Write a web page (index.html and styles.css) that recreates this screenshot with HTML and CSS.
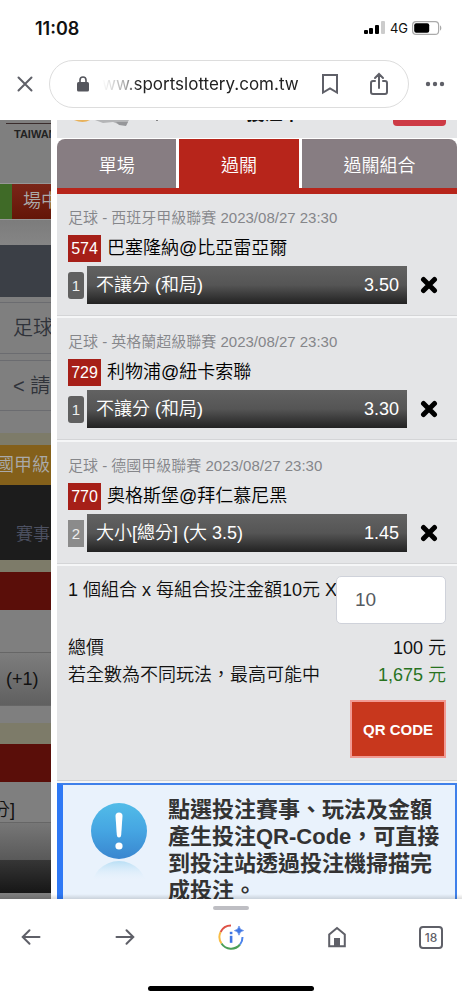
FILE: index.html
```html
<!DOCTYPE html>
<html lang="zh-TW">
<head>
<meta charset="utf-8">
<meta name="viewport" content="width=device-width, initial-scale=1">
<title>投注單</title>
<link rel="stylesheet" href="styles.css">
</head>
<body>
<div class="status">
  <span class="clock">11:08</span>
  <span class="signals">
    <svg width="22" height="14" viewBox="0 0 22 14"><rect x="0" y="9" width="4" height="4" rx="1"/><rect x="5" y="7" width="4" height="6" rx="1"/><rect x="11" y="4" width="4" height="9" rx="1"/><rect x="17" y="0" width="4" height="13" rx="1" fill="#ccc"/></svg>
    <span class="net">4G</span>
    <svg width="30" height="14" viewBox="0 0 30 14"><rect x=".6" y=".6" width="26" height="12.8" rx="3.5" fill="none" stroke="#aaa" stroke-width="1.2"/><rect x="2.2" y="2.2" width="15" height="9.6" rx="2"/><path d="M28 4.5c1.8.6 1.8 4.4 0 5z" fill="#aaa"/></svg>
  </span>
</div>
<nav class="browser">
  <button class="icon" aria-label="關閉"><svg width="16" height="16" viewBox="0 0 16 16"><path d="M1.5 1.5l13 13M14.5 1.5l-13 13" class="ln"/></svg></button>
  <div class="pill">
    <svg width="12" height="16" viewBox="0 0 12 16"><rect y="6" width="12" height="9.5" rx="1.6" fill="#55565d"/><path d="M3 7V4a3 3 0 0 1 6 0v3" fill="none" stroke="#55565d" stroke-width="1.6"/></svg>
    <span class="url">ww.sportslottery.com.tw</span>
    <button class="icon" aria-label="書籤"><svg width="18" height="22" viewBox="0 0 18 22"><path d="M2 2h14v17.5l-7-4-7 4z" class="ln"/></svg></button>
    <button class="icon" aria-label="分享"><svg width="20" height="24" viewBox="0 0 20 24"><path d="M6 9H4a2 2 0 0 0-2 2v9a2 2 0 0 0 2 2h12a2 2 0 0 0 2-2v-9a2 2 0 0 0-2-2h-2M10 16V2.5M6 6l4-4 4 4" class="ln"/></svg></button>
  </div>
  <button class="icon" aria-label="更多"><svg width="20" height="6" viewBox="0 0 20 6" fill="#5f6068"><circle cx="3" cy="3" r="2.2"/><circle cx="10" cy="3" r="2.2"/><circle cx="17" cy="3" r="2.2"/></svg></button>
</nav>

<main class="view">
  <aside class="under">
    <div class="brand">TAIWAN</div>
    <div class="live"><i></i><span>場中</span></div>
    <div class="shade"></div>
    <div class="slate"></div>
    <div class="pick first">足球</div>
    <div class="pick">&lt; 請</div>
    <div class="plain"></div>
    <div class="pale thin"></div>
    <div class="gold">國甲級</div>
    <div class="dark">賽事</div>
    <div class="pale thin"></div>
    <div class="maroon"></div>
    <div class="plain tall"></div>
    <div class="odd">(+1)</div>
    <div class="plain low"></div>
    <div class="pale"></div>
    <div class="maroon"></div>
    <div class="total">分]</div>
    <div class="fade"></div>
    <div class="black"></div>
    <div class="plain low"></div>
  </aside>

  <section class="slip">
    <header class="head">
      <svg width="84" height="11" viewBox="0 0 84 11"><path d="M0 0h16q-7 4-16 0z" fill="#e8b25c"/><path d="M21 0h34l-3 5-8-1-5-2-10 1z" fill="#b4b5b7"/><path d="M42 2h12l-2 4-7-1z" fill="#96979a"/><path d="M82 0h2l-1 1z" fill="#222"/></svg>
      <h1>投注單</h1>
      <button class="shut" aria-label="關閉投注單"></button>
    </header>
    <div class="tabs">
      <button class="tab">單場</button>
      <button class="tab on">過關</button>
      <button class="tab wide">過關組合</button>
    </div>

    <article class="bet">
      <p class="league">足球 - 西班牙甲級聯賽 2023/08/27 23:30</p>
      <div class="match"><b>574</b><span>巴塞隆納@比亞雷亞爾</span></div>
      <div class="line"><i>1</i><div class="bar"><span>不讓分 (和局)</span><span>3.50</span></div>
        <button class="del" aria-label="刪除"><svg width="18" height="18" viewBox="0 0 18 18"><path d="M3.5 3.5l11 11M14.5 3.5l-11 11"/></svg></button></div>
    </article>
    <article class="bet">
      <p class="league">足球 - 英格蘭超級聯賽 2023/08/27 23:30</p>
      <div class="match"><b>729</b><span>利物浦@紐卡索聯</span></div>
      <div class="line"><i>1</i><div class="bar"><span>不讓分 (和局)</span><span>3.30</span></div>
        <button class="del" aria-label="刪除"><svg width="18" height="18" viewBox="0 0 18 18"><path d="M3.5 3.5l11 11M14.5 3.5l-11 11"/></svg></button></div>
    </article>
    <article class="bet">
      <p class="league">足球 - 德國甲級聯賽 2023/08/27 23:30</p>
      <div class="match"><b>770</b><span>奧格斯堡@拜仁慕尼黑</span></div>
      <div class="line"><i class="light">2</i><div class="bar"><span>大小[總分] (大 3.5)</span><span>1.45</span></div>
        <button class="del" aria-label="刪除"><svg width="18" height="18" viewBox="0 0 18 18"><path d="M3.5 3.5l11 11M14.5 3.5l-11 11"/></svg></button></div>
    </article>

    <div class="sum">
      <div class="stake"><label for="amt">1 個組合 x 每組合投注金額10元 X</label><input id="amt" type="text" inputmode="numeric" value="10"></div>
      <div class="row"><span>總價</span><span>100 元</span></div>
      <div class="row"><span>若全數為不同玩法，最高可能中</span><span class="win">1,675 元</span></div>
      <button class="qr">QR CODE</button>
    </div>

    <div class="note">
      <svg width="60" height="84" viewBox="0 0 60 84">
        <defs>
          <linearGradient id="g" x2="0" y2="1"><stop offset="0" stop-color="#52bce8"/><stop offset=".5" stop-color="#45a5e2"/><stop offset="1" stop-color="#3a86cf"/></linearGradient>
          <linearGradient id="r" gradientUnits="userSpaceOnUse" x1="0" y1="59" x2="0" y2="79"><stop offset="0" stop-color="#b9dff5"/><stop offset="1" stop-color="#e9f2fc" stop-opacity="0"/></linearGradient>
        </defs>
        <circle cx="30" cy="29" r="28" fill="url(#g)"/>
        <path d="M26.5 14q0-3.500 3.500-3.500t3.500 3.500l-1.300 19q-.3 2.500-2.200 2.500t-2.200-2.500z" fill="#fff"/>
        <circle cx="30" cy="44" r="3.600" fill="#fff"/>
        <circle cx="30" cy="87" r="28" fill="url(#r)"/>
      </svg>
      <p>點選投注賽事、玩法及金額產生投注QR-Code，可直接到投注站透過投注機掃描完成投注。</p>
    </div>
  </section>
</main>

<footer class="tools">
  <div class="grip"></div>
  <div class="keys">
    <button class="icon" aria-label="上一頁"><svg width="20" height="18" viewBox="0 0 20 18"><path d="M18.500 9H2M8.500 2.200L1.700 9l6.800 6.800" class="ln"/></svg></button>
    <button class="icon" aria-label="下一頁"><svg width="20" height="18" viewBox="0 0 20 18"><path d="M1.500 9H18M11.500 2.200L18.300 9l-6.800 6.800" class="ln"/></svg></button>
    <button class="icon info" aria-label="頁面資訊"><svg width="26" height="28" viewBox="0 0 26 28" fill="none" stroke-width="2"><path d="M2.600 9A11.500 11.500 0 0 1 13 2.500" stroke="#de5246"/><path d="M2.600 9A11.500 11.500 0 0 0 3.500 20.500" stroke="#f8bd45"/><path d="M3.500 20.500a11.500 11.500 0 0 0 18.500 1" stroke="#4a9f57"/><path d="M22 21.500A11.500 11.500 0 0 0 24.500 14" stroke="#4c84ec"/><path d="M21 3q.6 4 4.600 4.600-4 .6-4.600 4.600-.6-4-4.600-4.600 4-.6 4.600-4.600z" fill="#3f76e4" stroke="#3f76e4" stroke-width=".6"/><rect x="11.800" y="8.800" width="2.600" height="2.400" fill="#3f76e4"/><rect x="11.800" y="12.800" width="2.600" height="7" fill="#3f76e4"/></svg></button>
    <button class="icon" aria-label="首頁"><svg width="18" height="22" viewBox="0 0 18 22"><path d="M1.200 8.500L9 2l7.800 6.500v11.700H1.200z" fill="none" stroke="#5f6068" stroke-width="2"/><path d="M6 12h6v8H6z" fill="#5f6068"/></svg></button>
    <button class="icon"><span class="count">18</span></button>
  </div>
  <div class="home"></div>
</footer>
</body>
</html>
```
FILE: styles.css
```css
* { box-sizing: border-box; }
body {
  margin: 0;
  height: 100vh;
  display: flex;
  flex-direction: column;
  background: #fff;
  color: #111;
  font-family: "Liberation Sans", "Noto Sans CJK TC", sans-serif;
  font-size: 18px;
  font-weight: 350;
  overflow: hidden;
}
button, input { font: inherit; color: inherit; }
button { border: 0; padding: 0; background: none; }
h1, p { margin: 0; }
i, b { font-style: normal; font-weight: 400; }
svg { display: block; flex: none; }
.ln { fill: none; stroke: #5f6068; stroke-width: 2; stroke-linecap: round; }

.status {
  flex: none;
  height: 56px;
  padding: 0 20px 0 35px;
  display: flex;
  justify-content: space-between;
  align-items: center;
  font-family: Inter, sans-serif;
}
.clock { font-weight: 600; }
.signals { display: flex; align-items: center; gap: 4px; }
.net { font-size: 13px; font-weight: 400; line-height: 14px; }

.browser {
  flex: none;
  height: 64px;
  padding: 0 17px 9px 17px;
  display: flex;
  align-items: center;
  justify-content: space-between;
  gap: 16px;
}
.icon { display: flex; align-items: center; justify-content: center; }
.pill {
  flex: 1;
  height: 48px;
  padding: 0 19px 0 27px;
  display: flex;
  align-items: center;
  border: 1px solid #ddd;
  border-radius: 24px;
}
.url {
  flex: 1;
  margin-left: 13px;
  font: 400 17px/24px Inter, sans-serif;
  white-space: nowrap;
  color: #222;
  -webkit-mask-image: linear-gradient(90deg, transparent, #0006 24px, #000 36px);
  mask-image: linear-gradient(90deg, transparent, #0006 24px, #000 36px);
}
.pill .icon + .icon { margin-left: 30px; }

.view { flex: 1; min-height: 0; display: flex; overflow: hidden; position: relative; }
.view::after {
  content: "";
  position: absolute;
  inset: auto 0 0 0;
  height: 5px;
  background: linear-gradient(#0000, #0002);
}

.under { flex: none; width: 51px; overflow: hidden; background: #7f7f7f; white-space: nowrap; }
.brand {
  height: 63px;
  margin: 0 0 0 6px;
  padding: 4px 0 0 8px;
  background: linear-gradient(#3a2c2c, #3a2c2c) 0 3px / 100% 1px no-repeat;
  font: bold 11px/20px "Liberation Sans", sans-serif;
  color: #222;
}
.live { height: 37px; display: flex; border: solid #979797; border-width: 1px 0; color: #aaa; line-height: 34px; }
.live i { flex: none; width: 12px; background: #3f6a27; }
.live span { flex: 1; padding-left: 11px; background: linear-gradient(#7a2619, #641607); }
.shade { height: 25px; background: linear-gradient(#7c7c7c, #858585); }
.slate { height: 52px; background: #3b3f46; }
.pick {
  height: 51px;
  margin-top: 6px;
  padding-left: 13px;
  border: solid #6b6c70;
  border-width: 1px 0;
  font-size: 20px;
  line-height: 50px;
  color: #30333a;
}
.pick.first { height: 52px; margin-top: 5px; }
.plain { height: 22px; }
.tall { height: 42px; }
.low { height: 17px; }
.pale { height: 21px; background: #7d7b69; }
.thin { height: 12px; }
.gold { height: 40px; background: #84601a; color: #aaa; line-height: 40px; text-indent: -4px; }
.dark { height: 75px; padding: 26px 0 0 16px; background: #1c1c1c; color: #4d5162; font-size: 17px; line-height: 48px; }
.maroon { height: 38px; background: #5a0e09; }
.odd {
  height: 54px;
  padding-left: 6px;
  border: solid #666;
  border-width: 1px 0;
  background: linear-gradient(#7d7d7d, #606060);
  line-height: 52px;
}
.total { height: 41px; border-bottom: 1px solid #666; line-height: 56px; text-indent: -8px; }
.fade { height: 37px; background: linear-gradient(#777, #595959); }
.black { height: 33px; background: linear-gradient(#363636, #161616); }

.slip {
  flex: 1;
  min-width: 0;
  border: solid #fff;
  border-width: 0 5px 0 6px;
  background: #e4e5e7;
}
.head {
  height: 18px;
  padding: 0 11px 0 17px;
  display: flex;
  justify-content: space-between;
  overflow: hidden;
}
.head h1 { margin: -18px 4px 0 0; font-size: 18px; font-weight: 700; line-height: 24px; }
.shut { width: 53px; height: 6px; border-radius: 0 0 4px 4px; background: #cd3a45; }
.tabs { display: flex; gap: 3px; padding-top: 1px; background: #fff; border-bottom: 6px solid #b7251b; }
.tab { flex: 120; height: 49px; background: #877d82; color: #fff; }
.tab.wide { flex: 156; border-radius: 0 8px 0 0; }
.tab:first-child { border-radius: 8px 0 0 0; }
.tab.on { background: #b7251b; }

.bet { padding: 12px 11px; border-bottom: 2px solid #f5f6f7; box-shadow: inset 0 -1px #d4d5d7; }
.league { font-size: 15px; line-height: 24px; color: #85868a; white-space: nowrap; }
.match { display: flex; gap: 6px; margin: 5px 0 4px; line-height: 27px; color: #000; white-space: nowrap; }
.match b { width: 33px; background: #a61f18; color: #fff; font-size: 16px; text-align: center; }
.match span { line-height: 26px; }
.line { display: flex; align-items: center; gap: 3px; }
.line i { width: 16px; border-radius: 3px; background: #606060; color: #eee; font-size: 15px; line-height: 27px; text-align: center; }
.line i.light { border-radius: 0; background: #8b8b8b; }
.bar {
  flex: 1;
  display: flex;
  justify-content: space-between;
  padding: 0 8px 0 9px;
  background: linear-gradient(#626262, #555 50%, #222);
  color: #fff;
  line-height: 38px;
}
.del { width: 36px; padding-left: 10px; }
.del path { fill: none; stroke: #000; stroke-width: 5; stroke-linecap: round; }

.sum { padding: 10px 11px 23px; border-bottom: 2px solid #f5f6f7; box-shadow: inset 0 -1px #d0d1d3; }
.stake { display: flex; margin-bottom: 11px; }
.stake label { flex: 1; min-width: 0; line-height: 28px; white-space: nowrap; }
.stake input {
  width: 110px;
  height: 48px;
  padding: 0 18px;
  border: 1px solid #cfd2da;
  border-radius: 5px;
  background: #fff;
  color: #555a61;
  font-size: 19px;
}
.row { display: flex; justify-content: space-between; line-height: 27px; }
.win { color: #28731f; }
.qr {
  display: block;
  width: 96px;
  height: 58px;
  margin: 11px 0 0 auto;
  border: 2px solid #f19a93;
  background: #c8371d;
  color: #fff;
  font-size: 15px;
  font-weight: 700;
}
.note {
  display: flex;
  gap: 19px;
  padding: 11px 10px 20px 26px;
  border: 2px solid #3f80ea;
  border-left: 6px solid #2f79f5;
  background: #e9f2fc;
}
.note svg { margin-top: 6px; }
.note p { flex: 1; font-size: 22px; font-weight: 700; line-height: 27px; color: #333; }

.tools { flex: none; height: 101px; padding: 7px 0 9px; display: flex; flex-direction: column; align-items: center; }
.grip { width: 36px; height: 4px; border-radius: 2px; background: #bebec3; }
.keys { width: 100%; height: 54px; padding: 0 19px 0 21px; display: flex; justify-content: space-between; align-items: center; }
.info { width: 46px; }
.count {
  width: 24px;
  border: 2px solid #5f6068;
  border-radius: 4px;
  font: 500 12px/19px Inter, sans-serif;
  color: #5f6068;
}
.home { width: 166px; height: 5px; margin-top: auto; border-radius: 3px; background: #000; }
```
